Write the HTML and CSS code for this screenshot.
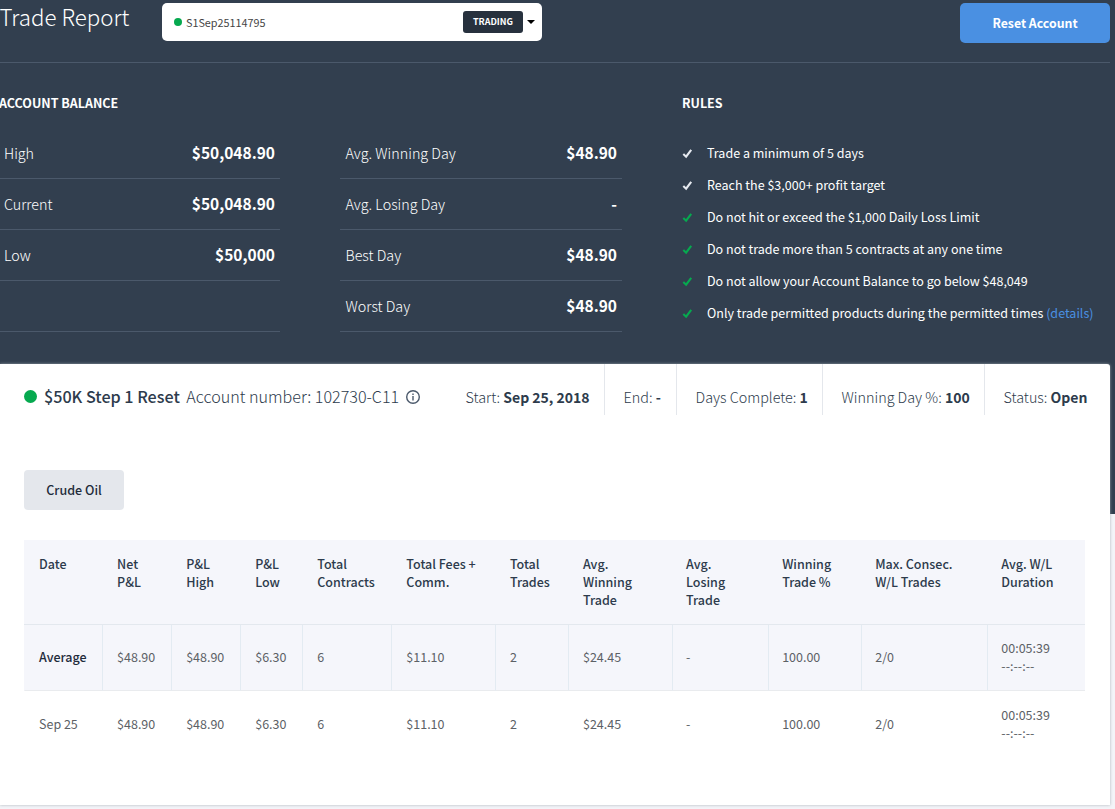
FILE: index.html
```html
<!DOCTYPE html>
<html lang="en">
<head>
<meta charset="utf-8">
<title>Trade Report</title>
<link rel="stylesheet" href="styles.css">
</head>
<body>
<header class="topbar">
  <h1 class="title">Trade Report</h1>
  <div class="picker"><i class="dot dot-sm"></i><span class="picker-name">S1Sep25114795</span><span class="tag">TRADING</span><i class="caret"></i></div>
  <button class="reset">Reset Account</button>
</header>
<section class="summary">
  <div class="balance">
    <h2 class="heading heading-balance">ACCOUNT BALANCE</h2>
    <div class="stats">
      <dl class="stat-list">
        <div class="stat"><dt>High</dt><dd>$50,048.90</dd></div>
        <div class="stat"><dt>Current</dt><dd>$50,048.90</dd></div>
        <div class="stat"><dt>Low</dt><dd>$50,000</dd></div>
        <div class="stat"></div>
      </dl>
      <dl class="stat-list stat-list-days">
        <div class="stat"><dt>Avg. Winning Day</dt><dd>$48.90</dd></div>
        <div class="stat"><dt>Avg. Losing Day</dt><dd>-</dd></div>
        <div class="stat"><dt>Best Day</dt><dd>$48.90</dd></div>
        <div class="stat"><dt>Worst Day</dt><dd>$48.90</dd></div>
      </dl>
    </div>
  </div>
  <div class="rules">
    <h2 class="heading">RULES</h2>
    <ul class="rule-list">
      <li class="rule"><svg class="check" viewBox="0 0 11 11"><path d="M1.3 6.1 4.1 8.7 9.2 1.8"/></svg>Trade a minimum of 5 days</li>
      <li class="rule"><svg class="check" viewBox="0 0 11 11"><path d="M1.3 6.1 4.1 8.7 9.2 1.8"/></svg>Reach the $3,000+ profit target</li>
      <li class="rule"><svg class="check met" viewBox="0 0 11 11"><path d="M1.3 6.1 4.1 8.7 9.2 1.8"/></svg>Do not hit or exceed the $1,000 Daily Loss Limit</li>
      <li class="rule"><svg class="check met" viewBox="0 0 11 11"><path d="M1.3 6.1 4.1 8.7 9.2 1.8"/></svg>Do not trade more than 5 contracts at any one time</li>
      <li class="rule"><svg class="check met" viewBox="0 0 11 11"><path d="M1.3 6.1 4.1 8.7 9.2 1.8"/></svg>Do not allow your Account Balance to go below $48,049</li>
      <li class="rule"><svg class="check met" viewBox="0 0 11 11"><path d="M1.3 6.1 4.1 8.7 9.2 1.8"/></svg><span>Only trade permitted products during the permitted times <a class="link">(details)</a></span></li>
    </ul>
  </div>
</section>
<main class="card">
  <div class="account">
    <i class="dot"></i><strong class="account-name">$50K Step 1 Reset</strong><span class="account-no">Account number: 102730-C11</span>
    <svg class="info" viewBox="0 0 14 14"><circle cx="7" cy="7" r="6.3"/><path d="M7 6v4.4M7 3.5v1.4"/></svg>
    <div class="facts">
      <span class="fact fact-start">Start: <b>Sep 25, 2018</b></span>
      <span class="fact fact-end">End: <b>-</b></span>
      <span class="fact fact-days">Days Complete: <b>1</b></span>
      <span class="fact fact-win">Winning Day %: <b>100</b></span>
      <span class="fact fact-status">Status: <b>Open</b></span>
    </div>
  </div>
  <button class="product">Crude Oil</button>
  <table class="trades">
    <colgroup><col class="c1"><col class="c2"><col class="c2"><col class="c4"><col class="c5"><col class="c6"><col class="c7"><col class="c8"><col class="c9"><col class="c10"><col class="c11"><col class="c12"></colgroup>
    <thead><tr><th>Date</th><th>Net<br>P&amp;L</th><th>P&amp;L<br>High</th><th>P&amp;L<br>Low</th><th>Total<br>Contracts</th><th>Total Fees +<br>Comm.</th><th>Total<br>Trades</th><th>Avg.<br>Winning<br>Trade</th><th>Avg.<br>Losing<br>Trade</th><th>Winning<br>Trade %</th><th>Max. Consec.<br>W/L Trades</th><th>Avg. W/L<br>Duration</th></tr></thead>
    <tbody>
      <tr class="average"><td>Average</td><td>$48.90</td><td>$48.90</td><td>$6.30</td><td>6</td><td>$11.10</td><td>2</td><td>$24.45</td><td>-</td><td>100.00</td><td>2/0</td><td>00:05:39<br>--:--:--</td></tr>
      <tr><td>Sep 25</td><td>$48.90</td><td>$48.90</td><td>$6.30</td><td>6</td><td>$11.10</td><td>2</td><td>$24.45</td><td>-</td><td>100.00</td><td>2/0</td><td>00:05:39<br>--:--:--</td></tr>
    </tbody>
  </table>
</main>
</body>
</html>
```
FILE: styles.css
```css
* { box-sizing: border-box; }
body {
  margin: 0;
  height: 809px;
  overflow: hidden;
  font-family: "Noto Sans CJK SC", sans-serif;
  font-size: 13px;
  line-height: 18px;
  color: #2d3b4c;
  background: linear-gradient(#323f4f 514px, #f3f4f8 514px);
}
h1, h2, dl, dd, ul { margin: 0; padding: 0; }
ul { list-style: none; }
button { border: 0; font-family: inherit; padding: 0; }

.topbar { display: flex; align-items: flex-start; width: 1110px; height: 63px; padding-top: 3px; border-bottom: 1px solid #4b596b; color: #fff; }
.title { width: 162px; font-size: 22.3px; font-weight: 300; line-height: 26px; white-space: nowrap; text-indent: -0.5px; }
.picker { display: flex; align-items: center; width: 380px; height: 38px; padding: 0 6px 0 12px; border-radius: 5px; background: #fff; color: #444; font-size: 10.8px; }
.picker-name { margin-left: 4px; flex: 1; }
.tag { width: 60px; height: 22px; border-radius: 3px; background: #27313e; color: #fff; font-size: 9px; font-weight: 700; line-height: 21px; text-align: center; }
.caret { margin-left: 4px; margin-right: 1px; border: 4px solid transparent; border-top-color: #000; border-bottom: 0; }
.dot { flex: none; width: 13px; height: 13px; border-radius: 50%; background: #06a94f; }
.dot-sm { width: 8px; height: 8px; }
.reset { margin-left: auto; width: 150px; height: 40px; border-radius: 5px; background: #4a90e2; color: #fff; font-size: 12.3px; line-height: 18px; font-weight: 700; }

.summary { display: flex; height: 301px; padding-top: 30px; color: #fff; }
.balance { width: 682px; }
.heading { font-size: 12.5px; font-weight: 700; line-height: 20px; }
.heading-balance { margin-left: -1px; }
.stats { display: flex; gap: 60px; padding-top: 15px; }
.stat-list { width: 280px; }
.stat-list-days { width: 282px; }
.stat { display: flex; justify-content: space-between; align-items: center; height: 51px; padding: 0 5px 0 4px; border-bottom: 1px solid #4b596b; font-size: 14.3px; font-weight: 300; }
.stat-list-days .stat { padding-left: 5.5px; }
.stat dd { padding-bottom: 2px; font-size: 15.5px; font-weight: 700; }
.rule-list { padding-top: 24px; }
.rule { display: flex; align-items: center; height: 32px; font-weight: 400; font-size: 12.53px; white-space: nowrap; }
.check { width: 11px; height: 11px; margin-right: 14px; fill: none; stroke: #e6eaf0; stroke-width: 2.1; }
.met { stroke: #06a94f; }
.link { color: #4a90e2; }

.card { width: 1110px; height: 441px; padding: 0 24px; background: #fff; border-radius: 0 3px 0 0; box-shadow: 0 0 3px rgba(160, 170, 175, .9); }
.account { display: flex; align-items: center; height: 64px; margin-bottom: 42px; white-space: nowrap; }
.account-name { margin-left: 7px; font-size: 16.15px; font-weight: 500; }
.account-no { margin-left: 6.5px; font-size: 16.1px; font-weight: 300; }
.info { width: 14px; height: 14px; margin: 2px 0 0 7px; fill: none; stroke: #4b596b; stroke-width: 1.4; }
.facts { display: flex; align-self: flex-start; margin-left: auto; margin-right: -24px; }
.fact { height: 51px; padding: 15px 0 0 18.5px; border-right: 1px solid #e4e7ec; font-size: 14.35px; font-weight: 300; line-height: 36px; }
.fact b { font-size: 14px; font-weight: 700; }
.fact-start { width: 158px; }
.fact-end { width: 72px; }
.fact-days { width: 146px; }
.fact-win { width: 162px; }
.fact-status { width: 125px; border: 0; }
.product { display: block; width: 100px; height: 40px; padding-bottom: 2px; border-radius: 4px; background: #e4e7ec; color: #1f2c3b; font-size: 12.5px; font-weight: 500; }

.trades { width: 1061px; margin-top: 30px; border-collapse: separate; border-spacing: 0; table-layout: fixed; font-size: 12.5px; }
.c1 { width: 78px; } .c2 { width: 69px; } .c4 { width: 62px; } .c5 { width: 89px; } .c6 { width: 104px; } .c7 { width: 73px; }
.c8 { width: 103px; } .c9 { width: 96px; } .c10 { width: 93px; } .c11 { width: 126px; } .c12 { width: 98px; }
.trades th { height: 85px; padding: 15px 0 0 15px; text-align: left; vertical-align: top; font-weight: 500; background: #f5f6fb; border-bottom: 1px solid #e3e8ee; white-space: nowrap; }
.trades td { height: 67px; padding: 0 0 2px 14px; color: #5c6166; vertical-align: middle; border-left: 1px solid transparent; }
.trades th:nth-child(n+7) { padding-left: 14.5px; }
.trades td:nth-child(n+7) { padding-left: 13.5px; }
.average td { height: 66px; background: #f5f6fb; border-bottom: 1px solid #e9ebee; }
.average td:nth-child(n+2) { border-left-color: #e3ebf2; }
.average td:first-child { color: #1f2c3b; font-weight: 500; }
```
